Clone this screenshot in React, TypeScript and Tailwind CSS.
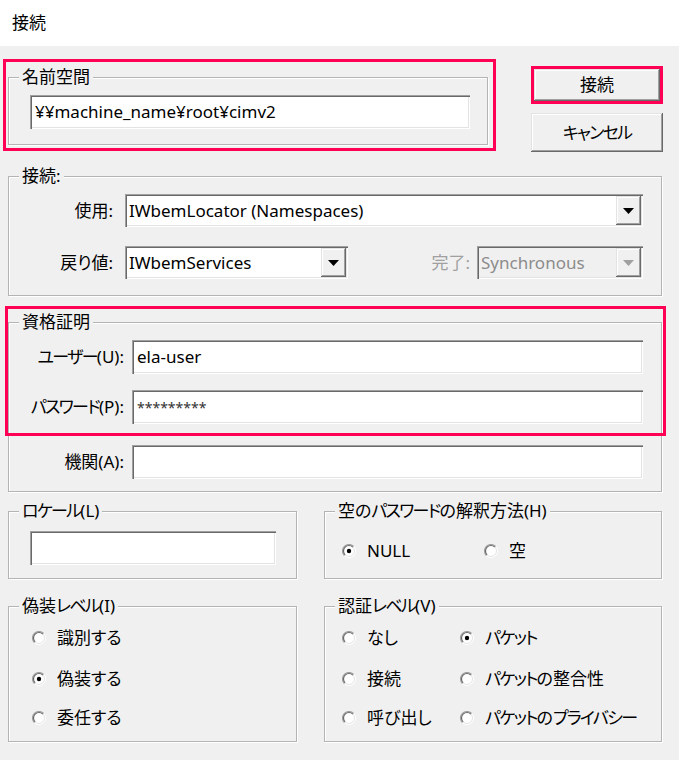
const sunken =
  "shadow-[inset_1px_1px_0_#a0a0a0,inset_2px_2px_0_#696969,inset_-1px_-1px_0_#ffffff,inset_-2px_-2px_0_#e3e3e3]";
const raised =
  "shadow-[inset_-1px_-1px_0_#696969,inset_1px_1px_0_#e3e3e3,inset_-2px_-2px_0_#a0a0a0,inset_2px_2px_0_#ffffff]";

// katakana in the dialog font is narrower than Noto's, so squeeze those runs a bit
function jp(s: string) {
  return s.split(/([\u30A0-\u30FF]+)/).map((part, i) =>
    /[\u30A0-\u30FF]/.test(part) ? (
      <span key={i} className="tracking-[-1.7px]">
        {part}
      </span>
    ) : (
      part
    )
  );
}

function Group({ title, className, children }: { title: string; className?: string; children?: React.ReactNode }) {
  return (
    <fieldset
      className={`border border-[#b4b4b4] shadow-[inset_1px_1px_0_#ffffff,1px_1px_0_#ffffff] ${className ?? ""}`}
    >
      <legend className="ml-[10px] bg-[#f0f0f0] px-[3px] leading-[20px]">{jp(title)}</legend>
      {children}
    </fieldset>
  );
}

function Field({ className, children }: { className?: string; children?: React.ReactNode }) {
  return <div className={`flex items-center bg-white pl-[5px] ${sunken} ${className ?? ""}`}>{children}</div>;
}

function Combo({ text, className, disabled }: { text: string; className?: string; disabled?: boolean }) {
  return (
    <div className={`flex h-[33px] p-[2px] ${sunken} ${disabled ? "bg-[#f0f0f0]" : "bg-white"} ${className ?? ""}`}>
      <div className={`flex flex-1 items-center pl-[2px] ${disabled ? "text-[#8c8c8c]" : ""}`}>{text}</div>
      <div className={`flex w-[25px] items-center justify-center bg-[#f0f0f0] ${raised}`}>
        <svg width="11" height="6" viewBox="0 0 11 6">
          <path d="M0 0 H11 L5.5 6 Z" fill={disabled ? "#a0a0a0" : "#000"} />
        </svg>
      </div>
    </div>
  );
}

function Radio({ label, checked }: { label: string; checked?: boolean }) {
  return (
    <div className="flex h-[24px] items-center">
      <svg width="14" height="14" viewBox="0 0 14 14" className="shrink-0">
        <circle cx="7" cy="7" r="6.5" fill="#fff" />
        <path d="M11.6 2.4 A6.5 6.5 0 0 1 2.4 11.6" stroke="#ffffff" fill="none" />
        <path d="M10.9 3.1 A5.5 5.5 0 0 1 3.1 10.9" stroke="#e3e3e3" fill="none" />
        <path d="M2.4 11.6 A6.5 6.5 0 0 1 11.6 2.4" stroke="#a0a0a0" strokeWidth="1.2" fill="none" />
        <path d="M3.1 10.9 A5.5 5.5 0 0 1 10.9 3.1" stroke="#696969" strokeWidth="1.2" fill="none" />
        {checked && <circle cx="7" cy="7" r="2.2" fill="#000" />}
      </svg>
      <span className="ml-[11px] whitespace-nowrap">{jp(label)}</span>
    </div>
  );
}

export default function App() {
  return (
    <div className="w-[679px] font-['Noto_Sans','Noto_Sans_CJK_JP',sans-serif] text-[17px] text-black [font-feature-settings:'palt']">
      <div className="flex h-[46px] items-center bg-white pl-[12px]">接続</div>

      <div className="h-[714px] bg-[#f0f0f0]">
        {/* namespace + buttons */}
        <div className="flex h-[106px]">
          <div className="ml-[3px] mt-[13px] h-[92px] w-[493px] border-[3px] border-[#ff0055] pl-[2px] pr-[5px] pt-[5px]">
            <Group title="名前空間" className="h-[78px]">
              <Field className="ml-[21px] mt-[8px] h-[34px] w-[440px]">¥¥machine_name¥root¥cimv2</Field>
            </Group>
          </div>
          <div className="ml-[35px] flex flex-col">
            <div className="mt-[20px] h-[38px] w-[132px] border-[3px] border-[#ff0055]">
              <button className={`h-full w-full bg-[#f0f0f0] ${raised}`}>接続</button>
            </div>
            <button className={`mt-[9px] h-[39px] w-[132px] bg-[#f0f0f0] ${raised}`}>{jp("キャンセル")}</button>
          </div>
        </div>

        {/* connection */}
        <Group title="接続:" className="ml-[8px] mt-[14px] h-[130px] w-[654px]">
          <div className="pr-[18px]">
            <div className="mt-[8px] flex items-center">
              <span className="w-[104px] text-right">使用:</span>
              <Combo text="IWbemLocator (Namespaces)" className="ml-[12px] flex-1" />
            </div>
            <div className="mt-[19px] flex items-center">
              <span className="w-[104px] text-right">戻り値:</span>
              <Combo text="IWbemServices" className="ml-[12px] w-[223px]" />
              <span className="ml-auto mr-[7px] text-[#a0a0a0]">完了:</span>
              <Combo text="Synchronous" className="w-[166px]" disabled />
            </div>
          </div>
        </Group>

        {/* credentials */}
        <div className="relative ml-[8px] mt-[16px] w-[654px]">
          <Group title="資格証明" className="h-[180px]">
            <div className="pr-[18px]">
              <div className="mt-[8px] flex items-center">
                <span className="w-[115px] text-right">{jp("ユーザー(U):")}</span>
                <Field className="ml-[8px] h-[34px] flex-1">ela-user</Field>
              </div>
              <div className="mt-[16px] flex items-center">
                <span className="w-[115px] text-right">{jp("パスワード(P):")}</span>
                <Field className="ml-[8px] h-[34px] flex-1">
                  <span className="text-[14px] text-[#333]">*********</span>
                </Field>
              </div>
              <div className="mt-[21px] flex items-center">
                <span className="w-[115px] text-right">機関(A):</span>
                <Field className="ml-[8px] h-[34px] flex-1" />
              </div>
            </div>
          </Group>
          <div className="pointer-events-none absolute left-[-3px] top-[-6px] h-[130px] w-[661px] border-[3px] border-[#ff0055]" />
        </div>

        {/* locale + empty password */}
        <div className="mt-[9px] flex">
          <Group title="ロケール(L)" className="ml-[8px] h-[78px] w-[289px]">
            <Field className="ml-[21px] mt-[10px] h-[34px] w-[246px]" />
          </Group>
          <Group title="空のパスワードの解釈方法(H)" className="ml-[27px] h-[78px] w-[338px]">
            <div className="mt-[18px] flex pl-[17px]">
              <div className="w-[142px]">
                <Radio label="NULL" checked />
              </div>
              <Radio label="空" />
            </div>
          </Group>
        </div>

        {/* impersonation + authentication */}
        <div className="mt-[17px] flex">
          <Group title="偽装レベル(I)" className="ml-[8px] h-[146px] w-[289px]">
            <div className="pl-[23px]">
              <div className="mt-[10px]">
                <Radio label="識別する" />
              </div>
              <div className="mt-[17px]">
                <Radio label="偽装する" checked />
              </div>
              <div className="mt-[15px]">
                <Radio label="委任する" />
              </div>
            </div>
          </Group>
          <Group title="認証レベル(V)" className="ml-[27px] h-[146px] w-[338px]">
            <div className="grid grid-cols-[118px_1fr] pl-[17px]">
              <div className="mt-[10px]">
                <Radio label="なし" />
              </div>
              <div className="mt-[10px]">
                <Radio label="パケット" checked />
              </div>
              <div className="mt-[17px]">
                <Radio label="接続" />
              </div>
              <div className="mt-[17px]">
                <Radio label="パケットの整合性" />
              </div>
              <div className="mt-[15px]">
                <Radio label="呼び出し" />
              </div>
              <div className="mt-[15px]">
                <Radio label="パケットのプライバシー" />
              </div>
            </div>
          </Group>
        </div>
      </div>
    </div>
  );
}
